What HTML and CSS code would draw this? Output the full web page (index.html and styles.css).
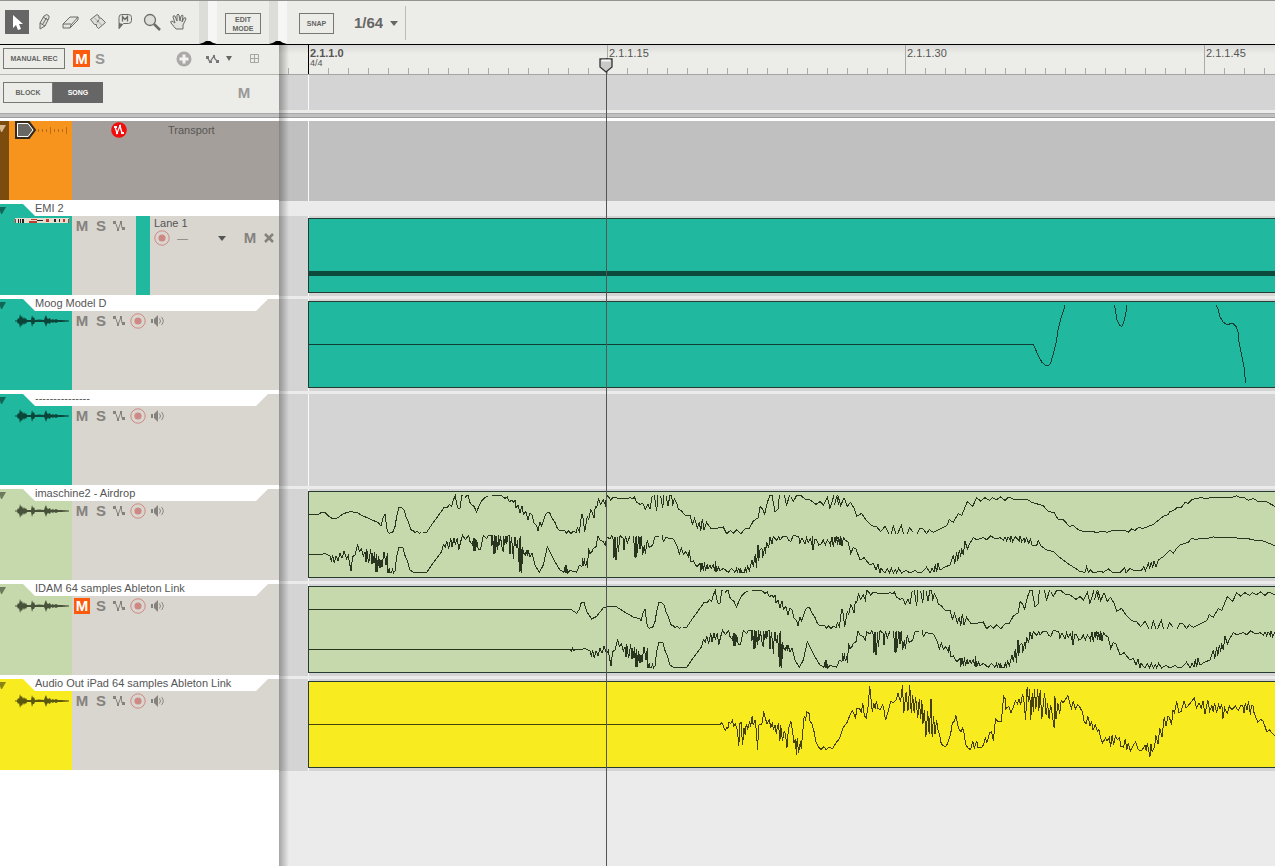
FILE: index.html
```html
<!DOCTYPE html>
<html lang="en">
<head>
<meta charset="utf-8">
<title>Sequencer</title>
<link rel="stylesheet" href="styles.css">
</head>
<body>
<svg class="defs" width="0" height="0" aria-hidden="true">
  <symbol id="automation" viewBox="0 0 12 12"><path d="M1 2 3 4 5 10 8 2 9 8 11 9" fill="none" stroke="currentColor" stroke-width="1"/><path d="M0 1h3v3H0zM4 8h2v3H4zM7 1h2v3H7zM9 7h3v3H9z" fill="currentColor"/></symbol>
  <symbol id="record" viewBox="0 0 16 16"><circle cx="8" cy="8" r="7.200" fill="none" stroke="#cf8984" stroke-width="1"/><circle cx="8" cy="8" r="3.600" fill="#cf8984"/></symbol>
  <symbol id="speaker" viewBox="0 0 14 12"><path d="M0 4h2v4H0zM3 4l4-4v12L3 8z" fill="#85827e"/><path d="M8.500 3.500q2 2.500 0 5M10.500 2q3.500 4 0 8" fill="none" stroke="#8c8984"/></symbol>
  <symbol id="audio" viewBox="0 0 54 14"><path d="M0 6.500H2L3 4 4 5 5 0 6 3 7 2 8 5 9 3 10 5 11 4 12 6 16 6 17 1 18 4 19 3 20 6 24 5.500 29 6 30 3 31 1 32 4 33 5 35 4 36 6 38 5 39 6 41 5 43 6 46 6 54 6.500V7.500L46 8 43 8 41 9 39 8 38 9 36 8 35 10 33 9 32 10 31 13 30 10 29 8H20L19 10 18 10 17 13 16 8H12L11 10 10 9 9 11 8 9 7 12 6 11 5 14 4 9 3 10 2 7.500H0z" fill="currentColor"/></symbol>
  <symbol id="fold" viewBox="0 0 7 7"><path d="M0 0h6L2 7H1L0 4z" fill="currentColor"/></symbol>
  <symbol id="caret" viewBox="0 0 8 5"><path d="M0 0h8L4 5z" fill="currentColor"/></symbol>
  <g id="wave-body">
    <path d="M243 123L250 95 255 88 258 110 262 140 268 145 278 142 285 125 290 95 296 68 304 67 312 75 318 95 325 110 332 134 340 137 345 143 352 139 358 146 362 143M370 142L380 142 388 130 400 112 412 96 422 82 432 68 442 68 448 58 455 64 460 45 466 32 470 58 475 72 480 70 485 32 490 31M495 38L502 31 506 31 508 50 514 58 522 64 530 82 535 68 545 48 555 38 565 32M575 33L605 32 615 40 622 36 628 50 636 45 640 52 645 45 648 70 654 60 660 85 666 62 670 88 678 80 684 104 690 84 696 90 702 115 710 122 714 138 720 110 725 124 735 92 740 84 748 80"/>
    <path transform="translate(720)" d="M28 80L35 98 45 112 52 130 60 137 75 138 80 146 86 136 92 146 100 138 108 143 112 128 118 140 125 88 128 90 134 140 142 92 146 105 152 75 156 82 162 100 166 65 170 68 175 42 182 58 190 45 196 60 200 32 205 34 212 45 220 37 235 40 255 42 270 38 278 42 283 36 290 52 300 58 308 54 316 74 324 58 330 72 337 32M343 31L347 60 350 77 354 31M362 32L368 70 372 31M378 32L384 62 390 31 395 31 398 62 403 42 412 60 415 72 425 78 436 92 450 90 457 118 464 100 472 130 478 110 482 138 487 102 492 134 500 112 512 130 530 130 550 126 560 146 572 136 580 145 590 134 603 146 615 132 628 130 640 108 655 98 660 65 668 72 674 88 682 52 690 31 696 31 705 80 714 72 718 31M733 31L740 62 748 31M752 35L760 50 770 31 782 31 795 42 810 45 828 58 840 50 850 60 862 36 870 70 882 31M884 60L890 32 896 60"/>
    <path transform="translate(1590)" d="M0 70L12 32M20 30L24 32 32 62 42 38 52 64 62 52 72 70 80 94 95 85 108 105 125 122 140 125 152 140 165 124 176 146M184 146L190 124 198 146M203 146L214 120 220 146M232 146L238 128 250 142M262 146L270 130 280 132 290 146 298 134 310 142 325 134 350 122 358 104 370 112 385 85 395 92 412 50 428 64 440 38 452 48 465 38 478 46 488 38 500 44 512 36 525 46 535 36 550 42 575 44 590 42 605 52 640 62 655 80 672 82 685 104 700 104 718 124 730 122 745 134 760 140 790 140 800 143 820 138 830 142 850 136 870 138 885 136 895 142 905 132 915 136 925 128 940 130 970 118 1000 94 1015 88 1020 80 1035 74 1040 68 1055 66 1065 52 1075 55 1085 44 1110 38 1125 40 1170 36 1195 38 1210 36 1220 32 1230 38 1240 36 1255 46 1270 40 1285 50 1305 48 1335 64"/>
    <path d="M25 208L65 208 75 206 90 212 94 230 98 210 103 235 108 212 114 228 120 205 126 220 132 198 140 222 145 212 148 230 153 258 158 215 165 210 173 178 178 200 184 192 190 212 195 200 198 232 200 192 206 235 212 192 216 238 218 205 222 235 224 202 228 262 230 208 233 260 236 212 240 250 243 225 246 245 252 200 258 240 262 205 264 264 268 250 270 264 275 262 278 250 280 264 285 258 290 215 296 188 308 186 316 215 322 228 330 255 342 264 380 262 395 240 410 220 425 200 430 180 436 186 440 168 446 192 452 160 456 185 462 160 466 178 472 158 476 196 482 170 488 151 496 164 506 151 510 170 518 180 520 160 522 198 525 160 527 198 530 165 535 195 542 192 550 152 560 160 566 151 575 151 575 182 578 151 580 206 583 151 585 206 588 152 592 195 596 151 596 184 602 152 604 180 610 200 611 152 614 180 618 152 620 178 624 152 630 152 630 208 634 155 638 190 640 222 643 165 645 155 649 190 653 165 656 232 658 160 660 262 662 152 665 264 668 185 670 204 676 210 679 195 682 212 684 196 690 215 696 205 705 240 718 262 730 240 742 186 752 205"/>
    <path transform="translate(720)" d="M32 205L45 230 60 255 72 262 76 240 78 265 80 240 82 265 90 256 110 262 118 240 126 245 128 220 130 244 133 220 136 244 140 228 142 248 146 190 150 206 156 200 160 190 168 185 174 152 180 165 190 170 196 180 200 155 210 162 215 152 220 165 222 218 225 155 227 225 230 225 232 155 235 200 240 152 250 160 252 196 256 152 262 175 270 152M281 152L284 216 286 155 288 218 290 152 292 205 296 152 298 192 300 155 302 192 304 152 308 210 313 180 316 208 322 165 328 188 338 180 345 155 356 153M366 151L370 170 378 158 400 162 412 185 418 206 424 188 430 208 437 200 445 215 448 195 452 230 460 228 470 245 480 235 482 260 486 235 490 258 494 232 496 258 502 236 504 252 510 240 514 250 520 240 526 262 526 228 530 260 535 245 540 258 550 250 565 262 575 250 585 262 590 250 592 264 596 248 600 264 602 248 604 264 612 264 616 250 620 265 622 240 628 258 636 225 640 245 646 208 649 248 654 180 656 228 660 195 666 190 668 220 674 186 676 206 680 170 686 190 690 155 696 178 700 155 710 165 716 155 720 165 730 153 740 154 746 165 752 170 760 152 776 154 780 175 786 158 795 178 800 158 805 172 812 160 815 180 818 152 819 196 824 165 830 165 836 180 844 176 850 165 856 180 862 165 872 178 876 155 880 178 886 160 890 155 900 172"/>
    <path transform="translate(1590)" d="M0 185L5 160 10 185 14 155 17 175 20 155 23 180 26 155 30 180 32 152 36 184 40 158 45 165 55 172 62 205 70 188 78 192 90 225 102 218 120 240 130 235 138 255 144 238 150 264 153 250 165 264 172 252 178 264 184 250 190 264 196 254 200 264 206 250 215 264 228 256 240 264 255 256 265 264 275 262 280 258 290 246 300 264 306 250 312 262 316 238 320 262 324 235 330 255 345 246 360 240 370 210 374 236 380 200 383 228 388 195 392 215 395 190 400 210 405 168 412 192 420 175 430 158 440 164 460 158 470 164 482 152 495 162 510 158 520 165 525 155 530 168 534 155 542 168 543 152 548 170 555 155 568 168 570 152 575 170 582 160 584 174 590 158 596 175 602 162 606 180 620 182 625 166 632 182 650 195 670 200 690 218 720 240 740 252 750 260 765 262 770 245 775 262 782 254 790 264 810 258 820 262 835 252 850 264 870 262 884 248 888 264 900 250 915 258 935 255 942 245 946 258 955 235 959 252 964 230 968 248 972 228 978 245 985 225 1000 215 1020 195 1030 205 1040 190 1050 180 1075 172 1085 160 1100 164 1110 160 1125 162 1150 156 1190 158 1250 160 1275 166 1300 168 1335 182"/>
  </g>
</svg>

<header class="toolbar">
  <div class="tools">
    <button class="tool active" aria-label="Selection tool"><svg width="24" height="24" viewBox="0 0 24 24"><path d="M8 5v13l3-3 2 5 3-1-2-5h4z" fill="#fff"/></svg></button>
    <button class="tool" aria-label="Pencil tool"><svg width="24" height="24" viewBox="0 0 24 24"><path d="M8 19 8 13 12 6Q15 3 17 6V8L13 16zM8 13l5 3M11 7l5 3M10.500 14.500l4-6.500" fill="#ddddd9" stroke="#6b6b69"/></svg></button>
    <button class="tool" aria-label="Eraser tool"><svg width="24" height="24" viewBox="0 0 24 24"><path d="M4 14 11 7h8l-7 8-1 3H4zM4 14h8M11 18 19 10V7" fill="#e5e5e1" stroke="#6b6b69" stroke-linejoin="round"/></svg></button>
    <button class="tool" aria-label="Razor tool"><svg width="24" height="24" viewBox="0 0 24 24"><path d="M4.500 9.500 11 4.500l2 1.500v2h2l4.500 4.500-7 6-2-2v-2h-2z" fill="#ddddd9" stroke="#6b6b69"/><path d="M9 8.500l1 1m1 1 2 2m1 1 1 1m-2-5-2 3" stroke="#6b6b69"/></svg></button>
    <button class="tool" aria-label="Mute tool"><svg width="24" height="24" viewBox="0 0 24 24"><path d="M8.500 4.500h7q3 0 3 3v3q0 3-3 3h-5L6 18.500V7.500q0-3 2.500-3z" fill="#e6e6e2" stroke="#6b6b69"/><path d="M9.500 11.500V6.500L12 9.500l2.500-3v5" fill="none" stroke="#6b6b69" stroke-width="1.300"/><path d="M6 13v6l4-5z" fill="#6b6b69"/></svg></button>
    <button class="tool" aria-label="Magnifying glass tool"><svg width="24" height="24" viewBox="0 0 24 24"><circle cx="10" cy="10" r="5.500" fill="#ddddd9" stroke="#6b6b69" stroke-width="1.300"/><path d="M14 14l6 6" stroke="#6b6b69" stroke-width="2.500"/></svg></button>
    <button class="tool" aria-label="Hand tool"><svg width="24" height="24" viewBox="0 0 24 24"><path d="M9 19 4 13q-1-2 1-2l3 2L6 7q0-2 2-1l2 5V5q1-2 2 0l1 6 1-5q2-2 2 0l-1 6 2-4q2-1 2 1l-3 6v4z" fill="#e2e2de" stroke="#6b6b69"/></svg></button>
  </div>
  <div class="separator"><svg width="18" height="3" viewBox="0 0 18 3"><path d="M0 3Q5 2 7 0h4Q13 2 18 3z"/></svg></div>
  <div class="edit-group"><button class="outlined edit">EDIT MODE</button></div>
  <div class="separator"><svg width="18" height="3" viewBox="0 0 18 3"><path d="M0 3Q5 2 7 0h4Q13 2 18 3z"/></svg></div>
  <div class="snap-group">
    <button class="outlined snap">SNAP</button>
    <label class="snap-value"><select aria-label="Snap value"><option>1/64</option></select><svg width="8" height="5"><use href="#caret"/></svg></label>
  </div>
</header>

<main class="arrange">
  <section class="track-list" aria-label="Tracks">
    <div class="list-bar rec-bar">
      <button class="outlined manual">MANUAL REC</button>
      <button class="letter on" aria-label="Mute all">M</button>
      <button class="letter" aria-label="Solo all">S</button>
      <div class="bar-end">
        <button class="plain" aria-label="Add lane"><svg width="16" height="16" viewBox="0 0 16 16"><circle cx="8" cy="8" r="7.500" fill="#aaa9a7"/><path d="M8 3.500v9M3.500 8h9" stroke="#f3f3f1" stroke-width="3"/></svg></button>
        <button class="plain automation-menu" aria-label="Automation menu"><svg width="13" height="10" viewBox="0 0 13 10"><path d="M1 3 4 8 8 2 9 5 12 8" fill="none" stroke="#777" stroke-width="1.300"/><path d="M0 2h3v3H0zM3 7h3v2H3zM7 1h2v3H7zM10 6h3v3h-3z" fill="#777"/></svg><svg class="menu-caret" width="6" height="5" viewBox="0 0 8 5" preserveAspectRatio="none"><path d="M0 0h8L4 5z" fill="#666"/></svg></button>
        <button class="plain" aria-label="Fold all"><svg width="9" height="9" viewBox="0 0 9 9"><path d="M.5.5h8v8h-8zM4.500 0v9M0 4.500h9" fill="none" stroke="#a5a5a2"/></svg></button>
      </div>
    </div>
    <div class="list-bar mode-bar">
      <div class="segments"><button class="outlined">BLOCK</button><button class="outlined chosen">SONG</button></div>
      <button class="letter block-mute" aria-label="Mute blocks">M</button>
    </div>
    <div class="divider"></div>

    <article class="transport">
      <div class="stripe"><svg width="7" height="7"><use href="#fold"/></svg></div>
      <div class="transport-color"><svg width="54" height="18" viewBox="0 0 54 18"><path d="M1 1h13l6 8-6 8H1z" fill="#6a6865" stroke="#332819" stroke-width="2"/><path d="M2.500 2.500H13L18 9l-5 6.500H2.500z" fill="none" stroke="#fff"/><path d="M23.500 8v3M27.500 8v3M31.500 8v3M35.500 6v7M39.500 8v3M43.500 8v3M47.500 8v3M51.500 6v7" stroke="#b96d13"/></svg></div>
      <button class="plain touched" aria-label="Track automation"><svg width="16" height="16" viewBox="0 0 16 16"><circle cx="8" cy="8" r="7.800" fill="#f20d0d"/><path d="M4 5 6 11 9 4 11 11 12 11" fill="none" stroke="#fff" stroke-width="1.300"/><path d="M3 4h3v2H3zM5 9h2v3H5zM8 3h2v3H8zM10 10h3v2h-3z" fill="#fff"/></svg></button>
      <span class="transport-name">Transport</span>
    </article>

    <article class="track teal wide">
      <svg class="fold" width="7" height="7"><use href="#fold"/></svg>
      <h2 class="name">EMI 2</h2>
      <div class="row">
        <div class="picture device"><svg width="54" height="5" viewBox="0 0 54 5"><path fill="#e6ddd0" d="M0 0h54v5H0z"/><path fill="#222" d="M3 1h1v4H3zM5 1h1v4H5zM7 1h2v4H7zM22 2h6v1h-6zM39 1h2v3h-2zM44 1h1v3h-1z"/><path fill="#c33b2b" d="M14 3h8v2h-8zM16 1h6v1h-6zM31 1h3v3h-3zM48 1h2v3h-2zM0 1h1v4H0zM53 1h1v4h-1z"/></svg></div>
        <div class="controls"><button class="letter" aria-label="Mute">M</button><button class="letter" aria-label="Solo">S</button><button class="plain" aria-label="Automation"><svg width="12" height="12"><use href="#automation"/></svg></button></div>
        <div class="lane-color"></div>
        <div class="note-lane">
          <span class="lane-name">Lane 1</span>
          <div class="lane-controls">
            <button class="plain" aria-label="Record lane"><svg width="16" height="16"><use href="#record"/></svg></button>
            <label class="lane-select"><select aria-label="Lane groove"><option>—</option></select><svg width="8" height="5"><use href="#caret"/></svg></label>
            <button class="letter" aria-label="Mute lane">M</button>
            <button class="plain" aria-label="Delete lane"><svg width="10" height="10" viewBox="0 0 10 10"><path d="M1 1l8 8M9 1 1 9" stroke="#85827e" stroke-width="2.500"/></svg></button>
          </div>
        </div>
      </div>
    </article>

    <article class="track teal">
      <svg class="fold" width="7" height="7"><use href="#fold"/></svg>
      <h2 class="name">Moog Model D</h2>
      <div class="row"><div class="picture"><svg width="54" height="14"><use href="#audio"/></svg></div>
        <div class="controls"><button class="letter" aria-label="Mute">M</button><button class="letter" aria-label="Solo">S</button><button class="plain" aria-label="Automation"><svg width="12" height="12"><use href="#automation"/></svg></button><button class="plain" aria-label="Record"><svg width="16" height="16"><use href="#record"/></svg></button><button class="plain" aria-label="Monitor"><svg width="14" height="12"><use href="#speaker"/></svg></button></div></div>
    </article>
    <article class="track teal">
      <svg class="fold" width="7" height="7"><use href="#fold"/></svg>
      <h2 class="name">---------------</h2>
      <div class="row"><div class="picture"><svg width="54" height="14"><use href="#audio"/></svg></div>
        <div class="controls"><button class="letter" aria-label="Mute">M</button><button class="letter" aria-label="Solo">S</button><button class="plain" aria-label="Automation"><svg width="12" height="12"><use href="#automation"/></svg></button><button class="plain" aria-label="Record"><svg width="16" height="16"><use href="#record"/></svg></button><button class="plain" aria-label="Monitor"><svg width="14" height="12"><use href="#speaker"/></svg></button></div></div>
    </article>
    <article class="track green">
      <svg class="fold" width="7" height="7"><use href="#fold"/></svg>
      <h2 class="name">imaschine2 - Airdrop</h2>
      <div class="row"><div class="picture"><svg width="54" height="14"><use href="#audio"/></svg></div>
        <div class="controls"><button class="letter" aria-label="Mute">M</button><button class="letter" aria-label="Solo">S</button><button class="plain" aria-label="Automation"><svg width="12" height="12"><use href="#automation"/></svg></button><button class="plain" aria-label="Record"><svg width="16" height="16"><use href="#record"/></svg></button><button class="plain" aria-label="Monitor"><svg width="14" height="12"><use href="#speaker"/></svg></button></div></div>
    </article>
    <article class="track green">
      <svg class="fold" width="7" height="7"><use href="#fold"/></svg>
      <h2 class="name">IDAM 64 samples Ableton Link</h2>
      <div class="row"><div class="picture"><svg width="54" height="14"><use href="#audio"/></svg></div>
        <div class="controls"><button class="letter on" aria-label="Mute">M</button><button class="letter" aria-label="Solo">S</button><button class="plain" aria-label="Automation"><svg width="12" height="12"><use href="#automation"/></svg></button><button class="plain" aria-label="Record"><svg width="16" height="16"><use href="#record"/></svg></button><button class="plain" aria-label="Monitor"><svg width="14" height="12"><use href="#speaker"/></svg></button></div></div>
    </article>
    <article class="track yellow">
      <svg class="fold" width="7" height="7"><use href="#fold"/></svg>
      <h2 class="name">Audio Out iPad 64 samples Ableton Link</h2>
      <div class="row"><div class="picture"><svg width="54" height="14"><use href="#audio"/></svg></div>
        <div class="controls"><button class="letter" aria-label="Mute">M</button><button class="letter" aria-label="Solo">S</button><button class="plain" aria-label="Automation"><svg width="12" height="12"><use href="#automation"/></svg></button><button class="plain" aria-label="Record"><svg width="16" height="16"><use href="#record"/></svg></button><button class="plain" aria-label="Monitor"><svg width="14" height="12"><use href="#speaker"/></svg></button></div></div>
    </article>
  </section>

  <section class="timeline" aria-label="Timeline">
    <div class="ruler">
      <div class="measure lead"></div>
      <div class="measure first"><b>2.1.1.0</b><small>4/4</small></div>
      <div class="measure second">2.1.1.15</div>
      <div class="measure">2.1.1.30</div>
      <div class="measure last">2.1.1.45</div>
    </div>
    <div class="block-lane"></div>
    <div class="divider"></div>
    <div class="transport-lane"></div>
    <div class="lane short"><div class="clip teal"><svg class="wave"><path class="note" d="M0 52h3000v5H0z"/></svg></div></div>
    <div class="lane"><div class="clip teal"><svg class="wave"><g transform="translate(651 -7) scale(.33333)"><path d="M-1953 149L220 149 236 184 246 202 258 212 266 211 272 204 279 180 288 145 294 105 303 70 313 38 315 30M463 30L467 50 470 72 478 90 485 94 490 84 497 60 501 31M769 30L774 42 780 66 790 82 802 89 812 86 820 86 828 94 835 115 837 140 845 180 852 215 857 265"/></g></svg></div></div>
    <div class="lane"></div>
    <div class="lane"><div class="clip green"><svg class="wave"><g transform="translate(-9 -7) scale(.33333)"><path d="M25 88L55 89 63 83 75 82 85 93 98 101 112 99 130 86 150 80 170 82 185 91 210 102 235 113 243 123"/><use href="#wave-body"/></g></svg></div></div>
    <div class="lane"><div class="clip green"><svg class="wave"><g transform="translate(251 -7) scale(.33333)"><path d="M-755 88L35 90 50 100 58 88 64 67 72 67 80 95 95 117 110 109 130 83 148 78 170 81 200 100 220 111 240 116 243 123M-755 208L30 208 34 214 38 204 42 214 47 208"/><use href="#wave-body"/></g></svg></div></div>
    <div class="lane"><div class="clip yellow"><svg class="wave"><g transform="translate(391 -4) scale(.36667 .33333)"><path d="M-1080 139L45 139 55 141 58 134 64 142 66 152 70 156 74 148 76 152 79 132 84 138 88 126 92 144 97 138 102 158 106 205 108 138 112 134 116 202 120 150 123 170 126 138 130 152 136 130 138 148 142 115 145 142 150 125 154 160 157 215 160 142 163 138 168 140 171 130 173 100 178 120 183 138 190 124 192 150 198 135 200 156 205 140 208 168 211 145 214 138 218 188 220 142 225 190 230 158 234 176 237 210 240 168 243 145 248 130 253 165 256 195 260 182 263 230 265 180 269 225 274 188 276 212 280 165 284 115 288 125 291 102 297 104 300 128 306 140 312 165 316 192 324 208 330 214 338 206 344 216 350 208 362 212 370 196 380 182 390 150 402 132 410 108 416 98 424 120 428 92 434 90 440 102 444 76 448 112 453 120 458 90 463 25 466 60 470 102 474 76 478 92 481 68 485 92 492 94 498 80 502 98 506 126 514 98 520 70 528 74 535 66 540 46 547 72 552 22 556 104 562 42 567 100 572 22 576 104 580 50 584 105 588 56 594 120 598 62 602 122 605 66 608 138 612 95 616 178 621 98 625 168 630 62 633 178 637 115 641 168 645 126 649 156 654 172 658 198 668 207 675 198 684 165 688 135 694 130 698 112 705 152 712 162 716 150 721 168 724 198 732 212 738 214 744 190 748 210 755 188 758 208 770 207 776 192 778 176 782 196 790 165 795 160 800 188 806 122 814 132 822 130 828 55 832 62 834 92 842 85 848 104 854 88 860 68 866 78 870 62 874 82 880 48 884 74 888 126 892 28 896 72 899 32 902 125 906 45 909 102 912 34 916 92 921 34 924 100 928 35 932 124 937 70 940 45 944 112 948 76 952 122 956 80 960 104 966 150 968 54 971 124 976 76 981 108 985 68 990 74 997 64 1003 52 1008 74 1013 90 1018 68 1024 94 1030 80 1036 88 1043 102 1048 132 1053 136 1058 115 1064 144 1068 132 1072 156 1078 140 1084 160 1088 155 1092 178 1098 195 1106 180 1110 190 1116 178 1120 206 1124 170 1128 200 1133 175 1138 185 1144 180 1148 205 1155 208 1160 182 1164 215 1168 194 1174 220 1180 205 1188 192 1195 215 1204 218 1214 202 1217 220 1220 195 1227 238 1230 198 1233 222 1240 206 1243 170 1249 198 1254 150 1260 178 1266 118 1271 144 1276 115 1280 118 1286 140 1290 96 1294 104 1300 70 1306 104 1312 100 1320 70 1326 90 1335 78 1348 60 1354 90 1361 76 1367 90 1372 68 1377 108 1385 66 1390 100 1396 82 1400 102 1403 74 1409 104 1414 80 1418 92 1423 78 1426 124 1431 90 1438 106 1444 84 1450 95 1460 84 1468 98 1474 84 1480 82 1484 106 1487 76 1492 95 1496 70 1501 110 1504 82 1508 84 1511 104 1521 132 1529 124 1536 130 1546 162 1553 155 1562 168 1575 180"/></g></svg></div></div>
    <div class="playhead"><svg width="14" height="16" viewBox="0 0 14 16"><path d="M1 1h12v8l-6 5-6-5z" fill="#c9c9c9" stroke="#333" stroke-width="1.300"/><path d="M2.500 2.500h9" stroke="#f5f5f5" stroke-width="2"/></svg></div>
  </section>
</main>
</body>
</html>
```
FILE: styles.css
```css
* { box-sizing: border-box; }

body {
  margin: 0;
  min-height: 100vh;
  display: flex;
  flex-direction: column;
  background: #fff;
  color: #555;
  font: 11px/12px "Liberation Sans", Arial, sans-serif;
  overflow-x: hidden;
}

svg { display: block; flex: none; }
.defs { position: absolute; }

button {
  margin: 0;
  padding: 0;
  border: 0;
  background: none;
  color: inherit;
  font: inherit;
  flex: none;
}

select {
  appearance: none;
  border: 0;
  padding: 0;
  background: none;
  color: inherit;
  font: inherit;
}

.plain { display: flex; align-items: center; color: #85827e; }

.outlined {
  height: 21px;
  border: 1px solid #777775;
  color: #646462;
  font-size: 7px;
  line-height: 9px;
  font-weight: bold;
  text-align: center;
}

.letter {
  width: 16px;
  height: 16px;
  color: #85827e;
  font-size: 15px;
  line-height: 16px;
  font-weight: bold;
  text-align: center;
}

.letter.on { background: #fc5a0c; color: #fff; }

/* Toolbar */
.toolbar {
  display: flex;
  height: 45px;
  border-top: 1px solid #939391;
  border-bottom: 1px solid #000;
  background: #ecece8;
}

.tools {
  display: flex;
  align-items: center;
  width: 199px;
  padding: 0 8px 2px 5px;
  gap: 3px;
}

.tool { width: 24px; height: 24px; }
.tool.active { background: #666; }

.separator {
  display: flex;
  align-items: flex-end;
  width: 18px;
  background: linear-gradient(90deg, #dcdcd8 9px, #f6f6f5 9px);
}

.edit-group {
  width: 52px;
  padding: 12px 8px;
}

.edit { width: 36px; }

.snap-group {
  display: flex;
  align-items: center;
  margin: 5px 0 4px;
  padding: 0 7px 0 12px;
  border-right: 1px solid #bbbbb8;
}

.snap { width: 35px; }

.snap-value {
  display: flex;
  align-items: center;
  margin-left: 20px;
  gap: 7px;
  font-size: 15px;
  line-height: 18px;
  font-weight: bold;
  color: #666;
}

.snap-value select { width: 29px; }

/* Track list */
.arrange {
  flex: 1;
  display: grid;
  grid-template-columns: 279px minmax(0, 1fr);
}

.list-bar {
  display: flex;
  align-items: center;
  padding-left: 3px;
  background: #ecece8;
}

.rec-bar { height: 30px; padding-bottom: 2px; border-bottom: 1px solid #b5b5b2; }
.rec-bar .manual { width: 62px; margin-right: 8px; }
.rec-bar .letter { color: #969694; margin-right: 2px; }
.rec-bar .letter.on { width: 17px; height: 17px; color: #fff; }
.bar-end { display: flex; align-items: center; margin-left: auto; padding-right: 20px; gap: 14px; }
.automation-menu { margin-right: 4px; }
.menu-caret { margin-left: 7px; }

.mode-bar { height: 38px; padding-bottom: 3px; justify-content: space-between; padding-right: 27px; }
.segments { display: flex; }
.segments .outlined { width: 50px; }
.segments .chosen { background: #666; border-color: #666; color: #fff; }
.block-mute { color: #999; }

.divider {
  height: 8px;
  background: linear-gradient(#a9a9a9 1px, #c0c0c0 1px 4px, #9c9c9c 4px 5px, #fff 5px);
}

.transport {
  display: flex;
  height: 79px;
  background: #a49f9b;
}

.stripe { width: 9px; padding-top: 4px; background: #7b4c0e; color: #d8b98e; }
.transport-color { width: 63px; padding-left: 6px; background: #f7941e; }
.touched { align-self: flex-start; margin-left: 39px; padding-top: 1px; }
.transport-name { margin: 3px 0 0 41px; color: #595654; }

.track {
  position: relative;
  height: 91px;
  margin-top: 4px;
  background: linear-gradient(90deg, var(--tint) 72px, #d9d6cf 72px);
}

.teal { --tint: #21b8a0; --ink: #0b4539; }
.green { --tint: #c6d9ac; --ink: #48523a; }
.yellow { --tint: #f8eb20; --ink: #5d580f; }

.fold { position: absolute; left: 0; top: 3px; color: var(--ink); opacity: .7; }

.name {
  height: 12px;
  margin: 0 11px 0 23px;
  padding-left: 12px;
  background: #fff;
  clip-path: polygon(0 0, 100% 0, calc(100% - 12px) 100%, 12px 100%);
  color: #555;
  font-size: 11px;
  line-height: 9px;
  font-weight: normal;
  white-space: nowrap;
}

.wide .name { margin-right: 0; clip-path: polygon(0 0, 100% 0, 100% 100%, 12px 100%); }

.row { display: flex; height: 79px; }
.picture { width: 72px; padding: 3px 0 0 15px; color: var(--ink); }
.picture.device { padding-top: 2px; }

.controls {
  display: flex;
  align-items: center;
  height: 20px;
  padding-left: 2px;
  gap: 3px;
}

.controls .letter:nth-child(2) { margin-right: 1px; }
.controls .plain + .plain { margin-left: 2px; }
.wide .controls { width: 64px; }
.lane-color { width: 14px; background: var(--tint); }

.note-lane { flex: 1; padding: 1px 5px 0 4px; }
.lane-name { display: block; color: #555; }
.lane-controls { display: flex; align-items: center; height: 18px; }
.lane-select { flex: 1; display: flex; align-items: center; justify-content: space-between; padding: 0 16px 0 7px; color: #555; }
.lane-select select { width: 20px; color: #85827e; }
.lane-controls .letter { margin-right: 6px; }

/* Timeline */
.timeline {
  position: relative;
  background: #ebebeb;
}

.timeline::before {
  content: "";
  position: absolute;
  z-index: 1;
  inset: 0 auto 0 0;
  width: 10px;
  background: linear-gradient(90deg, rgba(0, 0, 0, .3), transparent);
}

.ruler {
  display: flex;
  height: 30px;
  border-bottom: 1px solid #a5a5a2;
  background: linear-gradient(#dadad8, #ecece8 9px);
  color: #555;
}

.measure {
  flex: none;
  width: 299px;
  padding: 2px 0 0 1px;
  border-left: 1px solid #aaa;
  background: repeating-linear-gradient(90deg, transparent 0 19px, #aaa 19px 20px) 0 100% / 100% 6px no-repeat;
}

.measure.lead { width: 29px; border: 0; background-image: linear-gradient(90deg, transparent 9px, #aaa 9px 10px, transparent 10px); }
.measure.first { border-color: #000; }
.measure.second { width: 298px; }
.measure.last { flex: 1; }
.measure b, .measure small { display: block; }
.measure small { font-size: 9px; line-height: 9px; }

.block-lane { height: 38px; border-bottom: 3px solid #ebebe9; background: #d4d4d4; }
.transport-lane { height: 80px; margin-bottom: 15px; background: #c0c0c0; }

.lane {
  height: 92px;
  margin-bottom: 3px;
  padding: 2px 0 3px 29px;
  background: linear-gradient(90deg, transparent 29px, #fafafa 29px 30px, transparent 30px) #d4d4d4;
}

.lane.short { height: 80px; }

.block-lane, .transport-lane {
  background-image: linear-gradient(90deg, transparent 29px, #fafafa 29px 30px, transparent 30px);
}

.clip {
  height: 100%;
  border: 1px solid #263b32;
  border-right: 0;
  background: var(--tint);
}

.wave { width: 100%; height: 100%; overflow: hidden; fill: none; stroke: #29351f; shape-rendering: crispEdges; }
.teal .wave { stroke: #123f35; }
.yellow .wave { stroke: #46420c; }
.wave path, #wave-body path { vector-effect: non-scaling-stroke; stroke-width: 1px; }
.wave .note { fill: #0b4a3d; stroke: none; }

.playhead {
  position: absolute;
  z-index: 2;
  left: 320px;
  top: 13px;
  bottom: 0;
  width: 14px;
  background: linear-gradient(90deg, transparent 7px, #555 7px 8px, transparent 8px);
}
```
